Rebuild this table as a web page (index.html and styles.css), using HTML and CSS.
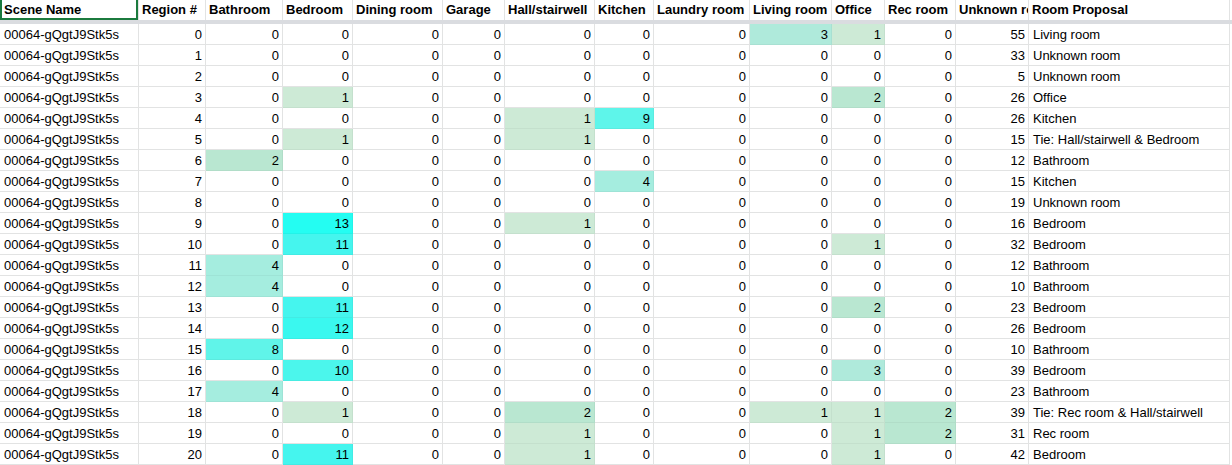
FILE: index.html
```html
<!DOCTYPE html>
<html>
<head>
<meta charset="utf-8">
<link rel="stylesheet" href="styles.css">
</head>
<body>
<div class="sheet">
  <div class="row head">
    <div class="c sel">Scene Name</div><div class="c">Region #</div><div class="c">Bathroom</div><div class="c">Bedroom</div><div class="c">Dining room</div><div class="c">Garage</div><div class="c">Hall/stairwell</div><div class="c">Kitchen</div><div class="c">Laundry room</div><div class="c">Living room</div><div class="c">Office</div><div class="c">Rec room</div><div class="c">Unknown room</div><div class="c">Room Proposal</div>
  </div>
  <div class="freeze"></div>
  <div class="row"><div class="c">00064-gQgtJ9Stk5s</div><div class="c n">0</div><div class="c n">0</div><div class="c n">0</div><div class="c n">0</div><div class="c n">0</div><div class="c n">0</div><div class="c n">0</div><div class="c n">0</div><div class="c n v3">3</div><div class="c n v1">1</div><div class="c n">0</div><div class="c n">55</div><div class="c">Living room</div></div>
  <div class="row"><div class="c">00064-gQgtJ9Stk5s</div><div class="c n">1</div><div class="c n">0</div><div class="c n">0</div><div class="c n">0</div><div class="c n">0</div><div class="c n">0</div><div class="c n">0</div><div class="c n">0</div><div class="c n">0</div><div class="c n">0</div><div class="c n">0</div><div class="c n">33</div><div class="c">Unknown room</div></div>
  <div class="row"><div class="c">00064-gQgtJ9Stk5s</div><div class="c n">2</div><div class="c n">0</div><div class="c n">0</div><div class="c n">0</div><div class="c n">0</div><div class="c n">0</div><div class="c n">0</div><div class="c n">0</div><div class="c n">0</div><div class="c n">0</div><div class="c n">0</div><div class="c n">5</div><div class="c">Unknown room</div></div>
  <div class="row"><div class="c">00064-gQgtJ9Stk5s</div><div class="c n">3</div><div class="c n">0</div><div class="c n v1">1</div><div class="c n">0</div><div class="c n">0</div><div class="c n">0</div><div class="c n">0</div><div class="c n">0</div><div class="c n">0</div><div class="c n v2">2</div><div class="c n">0</div><div class="c n">26</div><div class="c">Office</div></div>
  <div class="row"><div class="c">00064-gQgtJ9Stk5s</div><div class="c n">4</div><div class="c n">0</div><div class="c n">0</div><div class="c n">0</div><div class="c n">0</div><div class="c n v1">1</div><div class="c n v9">9</div><div class="c n">0</div><div class="c n">0</div><div class="c n">0</div><div class="c n">0</div><div class="c n">26</div><div class="c">Kitchen</div></div>
  <div class="row"><div class="c">00064-gQgtJ9Stk5s</div><div class="c n">5</div><div class="c n">0</div><div class="c n v1">1</div><div class="c n">0</div><div class="c n">0</div><div class="c n v1">1</div><div class="c n">0</div><div class="c n">0</div><div class="c n">0</div><div class="c n">0</div><div class="c n">0</div><div class="c n">15</div><div class="c">Tie: Hall/stairwell &amp; Bedroom</div></div>
  <div class="row"><div class="c">00064-gQgtJ9Stk5s</div><div class="c n">6</div><div class="c n v2">2</div><div class="c n">0</div><div class="c n">0</div><div class="c n">0</div><div class="c n">0</div><div class="c n">0</div><div class="c n">0</div><div class="c n">0</div><div class="c n">0</div><div class="c n">0</div><div class="c n">12</div><div class="c">Bathroom</div></div>
  <div class="row"><div class="c">00064-gQgtJ9Stk5s</div><div class="c n">7</div><div class="c n">0</div><div class="c n">0</div><div class="c n">0</div><div class="c n">0</div><div class="c n">0</div><div class="c n v4">4</div><div class="c n">0</div><div class="c n">0</div><div class="c n">0</div><div class="c n">0</div><div class="c n">15</div><div class="c">Kitchen</div></div>
  <div class="row"><div class="c">00064-gQgtJ9Stk5s</div><div class="c n">8</div><div class="c n">0</div><div class="c n">0</div><div class="c n">0</div><div class="c n">0</div><div class="c n">0</div><div class="c n">0</div><div class="c n">0</div><div class="c n">0</div><div class="c n">0</div><div class="c n">0</div><div class="c n">19</div><div class="c">Unknown room</div></div>
  <div class="row"><div class="c">00064-gQgtJ9Stk5s</div><div class="c n">9</div><div class="c n">0</div><div class="c n v13">13</div><div class="c n">0</div><div class="c n">0</div><div class="c n v1">1</div><div class="c n">0</div><div class="c n">0</div><div class="c n">0</div><div class="c n">0</div><div class="c n">0</div><div class="c n">16</div><div class="c">Bedroom</div></div>
  <div class="row"><div class="c">00064-gQgtJ9Stk5s</div><div class="c n">10</div><div class="c n">0</div><div class="c n v11">11</div><div class="c n">0</div><div class="c n">0</div><div class="c n">0</div><div class="c n">0</div><div class="c n">0</div><div class="c n">0</div><div class="c n v1">1</div><div class="c n">0</div><div class="c n">32</div><div class="c">Bedroom</div></div>
  <div class="row"><div class="c">00064-gQgtJ9Stk5s</div><div class="c n">11</div><div class="c n v4">4</div><div class="c n">0</div><div class="c n">0</div><div class="c n">0</div><div class="c n">0</div><div class="c n">0</div><div class="c n">0</div><div class="c n">0</div><div class="c n">0</div><div class="c n">0</div><div class="c n">12</div><div class="c">Bathroom</div></div>
  <div class="row"><div class="c">00064-gQgtJ9Stk5s</div><div class="c n">12</div><div class="c n v4">4</div><div class="c n">0</div><div class="c n">0</div><div class="c n">0</div><div class="c n">0</div><div class="c n">0</div><div class="c n">0</div><div class="c n">0</div><div class="c n">0</div><div class="c n">0</div><div class="c n">10</div><div class="c">Bathroom</div></div>
  <div class="row"><div class="c">00064-gQgtJ9Stk5s</div><div class="c n">13</div><div class="c n">0</div><div class="c n v11">11</div><div class="c n">0</div><div class="c n">0</div><div class="c n">0</div><div class="c n">0</div><div class="c n">0</div><div class="c n">0</div><div class="c n v2">2</div><div class="c n">0</div><div class="c n">23</div><div class="c">Bedroom</div></div>
  <div class="row"><div class="c">00064-gQgtJ9Stk5s</div><div class="c n">14</div><div class="c n">0</div><div class="c n v12">12</div><div class="c n">0</div><div class="c n">0</div><div class="c n">0</div><div class="c n">0</div><div class="c n">0</div><div class="c n">0</div><div class="c n">0</div><div class="c n">0</div><div class="c n">26</div><div class="c">Bedroom</div></div>
  <div class="row"><div class="c">00064-gQgtJ9Stk5s</div><div class="c n">15</div><div class="c n v8">8</div><div class="c n">0</div><div class="c n">0</div><div class="c n">0</div><div class="c n">0</div><div class="c n">0</div><div class="c n">0</div><div class="c n">0</div><div class="c n">0</div><div class="c n">0</div><div class="c n">10</div><div class="c">Bathroom</div></div>
  <div class="row"><div class="c">00064-gQgtJ9Stk5s</div><div class="c n">16</div><div class="c n">0</div><div class="c n v10">10</div><div class="c n">0</div><div class="c n">0</div><div class="c n">0</div><div class="c n">0</div><div class="c n">0</div><div class="c n">0</div><div class="c n v3">3</div><div class="c n">0</div><div class="c n">39</div><div class="c">Bedroom</div></div>
  <div class="row"><div class="c">00064-gQgtJ9Stk5s</div><div class="c n">17</div><div class="c n v4">4</div><div class="c n">0</div><div class="c n">0</div><div class="c n">0</div><div class="c n">0</div><div class="c n">0</div><div class="c n">0</div><div class="c n">0</div><div class="c n">0</div><div class="c n">0</div><div class="c n">23</div><div class="c">Bathroom</div></div>
  <div class="row"><div class="c">00064-gQgtJ9Stk5s</div><div class="c n">18</div><div class="c n">0</div><div class="c n v1">1</div><div class="c n">0</div><div class="c n">0</div><div class="c n v2">2</div><div class="c n">0</div><div class="c n">0</div><div class="c n v1">1</div><div class="c n v1">1</div><div class="c n v2">2</div><div class="c n">39</div><div class="c">Tie: Rec room &amp; Hall/stairwell</div></div>
  <div class="row"><div class="c">00064-gQgtJ9Stk5s</div><div class="c n">19</div><div class="c n">0</div><div class="c n">0</div><div class="c n">0</div><div class="c n">0</div><div class="c n v1">1</div><div class="c n">0</div><div class="c n">0</div><div class="c n">0</div><div class="c n v1">1</div><div class="c n v2">2</div><div class="c n">31</div><div class="c">Rec room</div></div>
  <div class="row"><div class="c">00064-gQgtJ9Stk5s</div><div class="c n">20</div><div class="c n">0</div><div class="c n v11">11</div><div class="c n">0</div><div class="c n">0</div><div class="c n v1">1</div><div class="c n">0</div><div class="c n">0</div><div class="c n">0</div><div class="c n v1">1</div><div class="c n">0</div><div class="c n">42</div><div class="c">Bedroom</div></div>
</div>
</body>
</html>
```

FILE: styles.css
```css
html, body {
  margin: 0;
  padding: 0;
  background: #ffffff;
}

body {
  font-family: "Liberation Sans", Arial, sans-serif;
  font-size: 13px;
  color: #000000;
  overflow: hidden;
}

.sheet {
  width: 1232px;
}

.row {
  display: grid;
  grid-template-columns: 139px 67px 77px 70px 90px 62px 90px 59px 96px 82px 53px 71px 73px 201px;
  height: 21px;
}

.c {
  box-sizing: border-box;
  height: 21px;
  line-height: 22px;
  padding: 0 3px 0 4px;
  border-right: 1px solid #e2e3e3;
  border-bottom: 1px solid #e2e3e3;
  white-space: nowrap;
  overflow: hidden;
  text-overflow: clip;
}

.n {
  text-align: right;
}

.head {
  height: 20px;
}

.head .c {
  height: 20px;
  line-height: 20px;
  font-weight: bold;
  border-bottom: none;
  padding-left: 3px;
}

.head .sel {
  box-shadow: inset 2px 0 0 #1b7a3e, inset -2px 0 0 #1b7a3e, inset 0 -2px 0 #1b7a3e;
  padding-left: 4px;
}

.freeze {
  height: 4px;
  background: #dadce0;
}

.v1, .v2, .v3, .v4, .v8, .v9, .v10, .v11, .v12, .v13 {
  border-color: rgba(0, 0, 0, 0.04);
}

.v1 { background: #cdead6; }
.v2 { background: #b9e7d1; }
.v3 { background: #afeadb; }
.v4 { background: #a5eddf; }
.v8 { background: #60f4e9; }
.v9 { background: #5ef5ea; }
.v10 { background: #4bf6ec; }
.v11 { background: #45f5ee; }
.v12 { background: #3af8ef; }
.v13 { background: #24fdf2; }
```
